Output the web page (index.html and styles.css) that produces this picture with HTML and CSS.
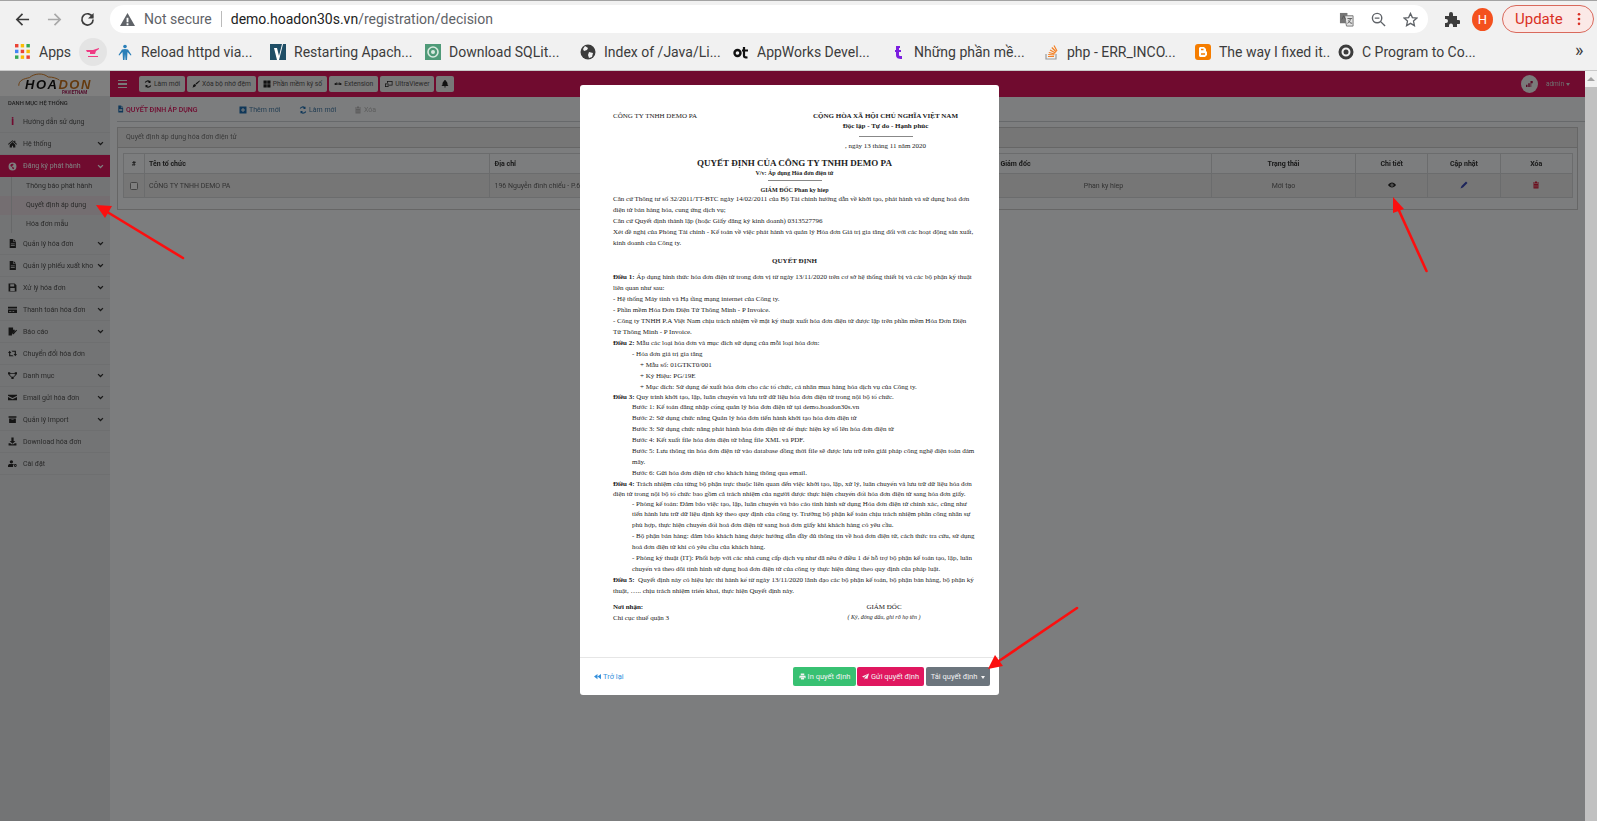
FILE: index.html
```html
<!DOCTYPE html>
<html lang="en">
<head>
    <meta charset="UTF-8">
    <meta name="viewport" content="width=device-width, initial-scale=1.0">
    <title>Quyết định áp dụng</title>
    <link rel="stylesheet" href="styles.css">
</head>
<body>
    <svg class="sprite" width="0" height="0">
        <symbol id="i-file" viewBox="0 0 16 16"><path d="M3 0h6v5h5v11H3zM10 0l4 4h-4zM5 8h7v1.500H5zM5 11h7v1.500H5z" fill-rule="evenodd"/></symbol>
        <symbol id="i-home" viewBox="0 0 16 16"><path d="M8 2 0 9l1 1 7-6 7 6 1-1-3-2.600V3h-2v1.800zM3 10v5h4v-3h2v3h4v-5L8 5.500z"/></symbol>
        <symbol id="i-globe" viewBox="0 0 16 16"><path d="M8 1a7 7 0 1 0 0 14A7 7 0 0 0 8 1zM5 4l3-1 2 1-1 2-2 1 1 2 3 1-1 3-2-1-1-3-3-2z" fill-rule="evenodd"/></symbol>
        <symbol id="i-save" viewBox="0 0 16 16"><path d="M1 1h11l3 3v11H1zM4 2v4h7V2zM4 9v5h8V9z" fill-rule="evenodd"/></symbol>
        <symbol id="i-card" viewBox="0 0 16 16"><path d="M0 3h16v3H0zM0 8h16v6H0zM2 11v1.500h4V11zM8 11v1.500h3V11z" fill-rule="evenodd"/></symbol>
        <symbol id="i-edit" viewBox="0 0 16 16"><path d="M1 1h8v4h3v2l-5 5v3H1zM15 5l1 1-6 7H8v-2z"/></symbol>
        <symbol id="i-retweet" viewBox="0 0 16 16"><path d="M3 3 0 7h2v6h8l-2-2H4V7h2zM13 13l3-4h-2V3H6l2 2h4v4h-2z"/></symbol>
        <symbol id="i-sitemap" viewBox="0 0 16 16"><path d="M0 2h4v4H0zM12 2h4v4h-4zM6 10h4v4H6zM4 3.500h8V5H4zM2.500 6l4 4-1 1-4-4zM13.500 6l-4 4 1 1 4-4z"/></symbol>
        <symbol id="i-mail" viewBox="0 0 16 16"><path d="M0 3h16v2L8 9 0 5zM0 7l8 4 8-4v6H0z"/></symbol>
        <symbol id="i-archive" viewBox="0 0 16 16"><path d="M1 2h14v3H1zM2 6h12v8H2zM6 8v1h4V8z" fill-rule="evenodd"/></symbol>
        <symbol id="i-download" viewBox="0 0 16 16"><path d="M6 1h4v6h3l-5 5-5-5h3zM1 11h3l2 2h4l2-2h3v4H1z"/></symbol>
        <symbol id="i-user" viewBox="0 0 16 16"><path d="M6 2a3 3 0 1 1 0 6 3 3 0 0 1 0-6zM0 14v-2c0-2 2-3 3-3h6c.5 0 1 .2 1.400.4A4 4 0 0 0 9 14zM13 9a2.500 2.500 0 1 0 0 5 2.500 2.500 0 0 0 0-5zm0 1.500a1 1 0 1 1 0 2 1 1 0 0 1 0-2z" fill-rule="evenodd"/></symbol>
        <symbol id="i-chev" viewBox="0 0 10 10"><path d="M1.500 3 5 6.500 8.500 3" fill="none" stroke="currentColor" stroke-width="1.800"/></symbol>
        <symbol id="i-refresh" viewBox="0 0 16 16"><path d="M13 1v5H8l2-2a4.500 4.500 0 0 0-6.400 1.500L1.500 4.500A7 7 0 0 1 12 2zM3 15v-5h5l-2 2a4.500 4.500 0 0 0 6.400-1.500l2.100 1A7 7 0 0 1 4 14z"/></symbol>
        <symbol id="i-trash" viewBox="0 0 16 16"><path d="M2 3h4V1h4v2h4v2H2zM3 6h10v9H3zM5.500 8v5h1V8zM9.500 8v5h1V8z" fill-rule="evenodd"/></symbol>
    </svg>

    <div class="toolbar">
        <svg class="tb-icon back" viewBox="0 0 16 16"><path d="M15 8H2.500M8 2 2 8l6 6" fill="none" stroke="#3c3c3c" stroke-width="1.800"/></svg>
        <svg class="tb-icon forward" viewBox="0 0 16 16"><path d="M1 8h12.500M8 2l6 6-6 6" fill="none" stroke="#a8a8a8" stroke-width="1.800"/></svg>
        <svg class="tb-icon reload" viewBox="0 0 16 16"><path d="M13.500 5.500A6 6 0 1 0 14 8" fill="none" stroke="#3c3c3c" stroke-width="1.800"/><path d="M14.500 1v6h-6z" fill="#3c3c3c"/></svg>
        <div class="omnibox">
            <svg class="warn" viewBox="0 0 16 16"><path d="M8 1 0 15h16zM7 6h2v5H7zM7 12h2v2H7z" fill="#5f6368" fill-rule="evenodd"/></svg>
            <span class="not-secure">Not secure</span>
            <span class="url"><b>demo.hoadon30s.vn</b>/registration/decision</span>
            <svg class="omni-icon translate" viewBox="0 0 16 16"><path d="M1 1h8v11H1z" fill="#757575"/><path d="M6 4h9v11H8z" fill="#e4e4e4" stroke="#757575"/><path d="M3 8l2-4 2 4M9 7h5M12 7c0 3-1 4-3 5M10 9c1 2 2 3 4 3" fill="none" stroke="#555"/></svg>
            <svg class="omni-icon zoom-out" viewBox="0 0 16 16"><circle cx="6.500" cy="6.500" r="5" fill="none" stroke="#5f6368" stroke-width="1.500"/><path d="M10 10l5 5M4 6.500h5" stroke="#5f6368" stroke-width="1.500"/></svg>
            <svg class="omni-icon star" viewBox="0 0 16 16"><path d="m8 1.500 2 4.500 4.800.5-3.600 3.200 1 4.800L8 12.100l-4.200 2.400 1-4.800L1.200 6.500 6 6z" fill="none" stroke="#5f6368" stroke-width="1.400"/></svg>
        </div>
        <svg class="puzzle" viewBox="0 0 16 16"><path d="M1 5h4V3a2 2 0 0 1 4 0v2h4v4h1.500a2 2 0 0 1 0 4H13v3H9v-1.500a2 2 0 0 0-4 0V16H1v-4h1a2 2 0 0 0 0-4H1z" fill="#3c3c3c"/></svg>
        <span class="profile">H</span>
        <div class="update">
            <span>Update</span>
            <svg class="dots" viewBox="0 0 4 16"><circle cx="2" cy="2.500" r="1.500"/><circle cx="2" cy="8" r="1.500"/><circle cx="2" cy="13.500" r="1.500"/></svg>
        </div>
    </div>

    <div class="bookmarks">
        <a class="bm"><svg class="bm-icon" viewBox="0 0 14 14"><g><path d="M0 0h3v3H0z" fill="#ea4335"/><path d="M5 0h3v3H5z" fill="#fbbc05"/><path d="M10 0h3v3h-3z" fill="#34a853"/><path d="M0 5h3v3H0z" fill="#4285f4"/><path d="M5 5h3v3H5z" fill="#ea4335"/><path d="M10 5h3v3h-3z" fill="#fbbc05"/><path d="M0 10h3v3H0z" fill="#34a853"/><path d="M5 10h3v3H5z" fill="#fbbc05"/><path d="M10 10h3v3h-3z" fill="#ea4335"/></g></svg>Apps</a>
        <a class="bm bm-blank"><span class="bm-hover"><svg class="bm-icon" viewBox="0 0 16 16"><path d="M1 6h7l6-2v1l-3 2-1 3H5V8H2zM3 12h10v1H3z" fill="#ef3b84"/></svg></span></a>
        <a class="bm"><svg class="bm-icon" viewBox="0 0 16 16"><circle cx="8" cy="2.500" r="1.800" fill="#2a7fb8"/><path d="M8 5 5 5.500 1.500 11l.8.500L5.500 8 6 16h1.500L8 10l.5 6H10l.5-8 3.200 3.500.8-.5L11 5.500z" fill="#2a7fb8"/></svg>Reload httpd via...</a>
        <a class="bm"><svg class="bm-icon" viewBox="0 0 16 16"><path d="M0 0h16v16H0z" fill="#1f4e66"/><path d="M4 4h3l2 8 3-12h1L9 16H7z" fill="#fff"/></svg>Restarting Apach...</a>
        <a class="bm"><svg class="bm-icon" viewBox="0 0 16 16"><path d="M0 0h16v16H0z" fill="#4f9a78"/><circle cx="8" cy="8" r="5" fill="none" stroke="#d8eadf" stroke-width="1.600"/><circle cx="8" cy="8" r="2" fill="#d8eadf"/></svg>Download SQLit...</a>
        <a class="bm"><svg class="bm-icon" viewBox="0 0 16 16"><circle cx="8" cy="8" r="7.500" fill="#3c3c3c"/><path d="M5 2 8 4 7 6 4 7 3 5zM9 8l4 1-1 4-3 1-1-3z" fill="#f1f1f1"/></svg>Index of /Java/Li...</a>
        <a class="bm"><svg class="bm-icon" viewBox="0 0 16 16"><circle cx="4.500" cy="9" r="3" fill="none" stroke="#111" stroke-width="2.400"/><path d="M11 3v9c0 1 1 1.500 3.500 1.500M9 6.500h6" fill="none" stroke="#111" stroke-width="2.200"/></svg>AppWorks Devel...</a>
        <a class="bm"><svg class="bm-icon" viewBox="0 0 16 16"><path d="M6 2h4v2H9v2h2v2H9v3c0 1 1 1 3 1v3c-4 0-6-1-6-4V8H5V6h1z" fill="#7c1fe0"/></svg>Những phần mề...</a>
        <a class="bm"><svg class="bm-icon" viewBox="0 0 16 16"><path d="M3 10v5h10v-5" fill="none" stroke="#9a9a9a" stroke-width="1.200"/><path d="M5 12.500h6M5.200 10.500l6 .5M5.800 8.500l6 1.500M7 6l5.500 3M8.800 3.500l4.500 4.500M11 1.500l3 5.500" stroke="#f48024" stroke-width="1.200"/></svg>php - ERR_INCO...</a>
        <a class="bm"><svg class="bm-icon" viewBox="0 0 16 16"><rect width="16" height="16" rx="3" fill="#f57d00"/><path d="M5 3h4l2 2v2l1 1v3l-2 2H5l-1-1V4z" fill="#fff"/><path d="M6 5.500h2.500M6 10h4" stroke="#f57d00" stroke-width="1.400"/></svg>The way I fixed it..</a>
        <a class="bm"><svg class="bm-icon" viewBox="0 0 16 16"><circle cx="8" cy="8" r="6" fill="none" stroke="#3c3c3c" stroke-width="3"/><circle cx="8" cy="8" r="2.500" fill="#3c3c3c"/></svg>C Program to Co...</a>
        <span class="bm-more">»</span>
    </div>

    <div class="app">
        <aside class="sidebar">
            <div class="logo">
                <svg class="logo-arc" viewBox="0 0 70 24"><path d="M1 22C1 13 9 11 18 9 26 2 40 1 48 8c8 0 14 2 18 5" fill="none" stroke="#d9832a" stroke-width="1.600"/></svg>
                <div class="logo-word">HOA<span>DON</span></div>
                <div class="logo-sub">PAVIETNAM</div>
            </div>
            <div class="side-title">DANH MỤC HỆ THỐNG</div>
            <ul class="menu">
                <li class="menu-item"><span class="menu-info">i</span>Hướng dẫn sử dụng</li>
                <li class="menu-item"><svg class="menu-icon"><use href="#i-home"/></svg>Hệ thống<svg class="chev"><use href="#i-chev"/></svg></li>
                <li class="menu-item active"><svg class="menu-icon"><use href="#i-globe"/></svg>Đăng ký phát hành<svg class="chev"><use href="#i-chev"/></svg></li>
                <li class="submenu">
                    <div class="sub-item">Thông báo phát hành</div>
                    <div class="sub-item current">Quyết định áp dụng</div>
                    <div class="sub-item">Hóa đơn mẫu</div>
                </li>
                <li class="menu-item"><svg class="menu-icon"><use href="#i-file"/></svg>Quản lý hóa đơn<svg class="chev"><use href="#i-chev"/></svg></li>
                <li class="menu-item"><svg class="menu-icon"><use href="#i-file"/></svg>Quản lý phiếu xuất kho<svg class="chev"><use href="#i-chev"/></svg></li>
                <li class="menu-item"><svg class="menu-icon"><use href="#i-save"/></svg>Xử lý hóa đơn<svg class="chev"><use href="#i-chev"/></svg></li>
                <li class="menu-item"><svg class="menu-icon"><use href="#i-card"/></svg>Thanh toán hóa đơn<svg class="chev"><use href="#i-chev"/></svg></li>
                <li class="menu-item"><svg class="menu-icon"><use href="#i-edit"/></svg>Báo cáo<svg class="chev"><use href="#i-chev"/></svg></li>
                <li class="menu-item"><svg class="menu-icon"><use href="#i-retweet"/></svg>Chuyển đổi hóa đơn</li>
                <li class="menu-item"><svg class="menu-icon"><use href="#i-sitemap"/></svg>Danh mục<svg class="chev"><use href="#i-chev"/></svg></li>
                <li class="menu-item"><svg class="menu-icon"><use href="#i-mail"/></svg>Email gửi hóa đơn<svg class="chev"><use href="#i-chev"/></svg></li>
                <li class="menu-item"><svg class="menu-icon"><use href="#i-archive"/></svg>Quản lý Import<svg class="chev"><use href="#i-chev"/></svg></li>
                <li class="menu-item"><svg class="menu-icon"><use href="#i-download"/></svg>Download hóa đơn</li>
                <li class="menu-item"><svg class="menu-icon"><use href="#i-user"/></svg>Cài đặt</li>
            </ul>
        </aside>

        <main class="main">
            <header class="topbar">
                <div class="hamburger"><span></span><span></span><span></span></div>
                <button class="top-btn"><svg class="btn-icon"><use href="#i-refresh"/></svg>Làm mới</button>
                <button class="top-btn"><svg class="btn-icon" viewBox="0 0 16 16"><path d="M15 1l1 1-7 7-2-2zM6 8l2 2c0 3-3 5-8 5 2-1 2-2 2-3 0-2 2-4 4-4z"/></svg>Xóa bộ nhớ đệm</button>
                <button class="top-btn"><svg class="btn-icon" viewBox="0 0 16 16"><path d="M1 1h6.500v6.500H1zM8.500 1H15v6.500H8.500zM1 8.500h6.500V15H1zM8.500 8.500H15V15H8.500z"/></svg>Phần mềm ký số</button>
                <button class="top-btn"><svg class="btn-icon" viewBox="0 0 16 16"><path d="M0 8l5-3 3 1 3-1 5 3-3 2H3zM5 7v2h6V7z" fill-rule="evenodd"/></svg>Extension</button>
                <button class="top-btn"><svg class="btn-icon" viewBox="0 0 16 16"><path d="M4 2h11v9H8v-1.500h5.500v-6H5.500V6H4zM0 7h7v7H0zM1.500 8.500v4h4v-4z" fill-rule="evenodd"/></svg>UltraViewer</button>
                <button class="top-btn"><svg class="btn-icon only" viewBox="0 0 16 16"><path d="M8 0a1.500 1.500 0 0 1 1.500 2C12 3 13 5 13 8c0 2 1 3 2 4H1c1-1 2-2 2-4 0-3 1-5 3.500-6A1.500 1.500 0 0 1 8 0zM6 13h4a2 2 0 0 1-4 0z"/></svg></button>
                <div class="user">
                    <span class="avatar"><svg viewBox="0 0 16 16"><path d="M4 9h2v3H4zM7 7h2v5H7zM10 4h3v3h-2v5h-1z" fill="#b0174f"/></svg></span>
                    <span class="user-name">admin</span><i class="caret"></i>
                </div>
            </header>
            <section class="content">
                <div class="page-head">
                    <h2 class="page-title"><svg class="head-icon"><use href="#i-file"/></svg>QUYẾT ĐỊNH ÁP DỤNG</h2>
                    <a class="action add"><svg class="head-icon" viewBox="0 0 16 16"><path d="M1 1h14v14H1zM7 4v3H4v2h3v3h2V9h3V7H9V4z" fill-rule="evenodd"/></svg>Thêm mới</a>
                    <a class="action reload-link"><svg class="head-icon"><use href="#i-refresh"/></svg>Làm mới</a>
                    <a class="action off"><svg class="head-icon"><use href="#i-trash"/></svg>Xóa</a>
                </div>
                <div class="panel">
                    <div class="panel-head">Quyết định áp dụng hóa đơn điện tử</div>
                    <div class="panel-body">
                        <table class="grid">
                            <colgroup>
                                <col class="c-check"><col class="c-name"><col class="c-addr"><col class="c-boss"><col class="c-state"><col class="c-op"><col class="c-op"><col class="c-op">
                            </colgroup>
                            <thead>
                                <tr>
                                    <th class="center">#</th>
                                    <th>Tên tổ chức</th>
                                    <th>Địa chỉ</th>
                                    <th>Giám đốc</th>
                                    <th class="center">Trạng thái</th>
                                    <th class="center">Chi tiết</th>
                                    <th class="center">Cập nhật</th>
                                    <th class="center">Xóa</th>
                                </tr>
                            </thead>
                            <tbody>
                                <tr>
                                    <td class="center"><span class="checkbox"></span></td>
                                    <td>CÔNG TY TNHH DEMO PA</td>
                                    <td>196 Nguyễn đình chiểu - P.6 - Quận 3 - TP Hồ Chí Minh</td>
                                    <td class="center">Phan ky hiep</td>
                                    <td class="center">Mới tạo</td>
                                    <td class="center"><svg class="row-icon eye" viewBox="0 0 16 16"><path d="M0 8c2-3 5-5 8-5s6 2 8 5c-2 3-5 5-8 5s-6-2-8-5zm8-3a3 3 0 1 0 0 6 3 3 0 0 0 0-6z" fill-rule="evenodd"/><circle cx="8" cy="8" r="1.500"/></svg></td>
                                    <td class="center"><svg class="row-icon pen" viewBox="0 0 16 16"><path d="M12 1l3 3-9 9-5 2 2-5z"/></svg></td>
                                    <td class="center"><svg class="row-icon bin"><use href="#i-trash"/></svg></td>
                                </tr>
                            </tbody>
                        </table>
                    </div>
                </div>
            </section>
        </main>

        <div class="scrollbar">
            <i class="scroll-up"></i>
            <div class="scroll-thumb"></div>
        </div>

        <div class="backdrop"></div>

        <div class="modal">
            <div class="doc">
                <div class="doc-head">
                    <div class="doc-company">CÔNG TY TNHH DEMO PA</div>
                    <div class="doc-nation">
                        <div class="ln-s"><b>CỘNG HÒA XÃ HỘI CHỦ NGHĨA VIỆT NAM</b></div>
                        <div class="ln-s"><b>Độc lập - Tự do - Hạnh phúc</b></div>
                        <hr class="rule rule-head">
                        <div class="ln-s">, ngày 13 tháng 11 năm 2020</div>
                    </div>
                </div>
                <div class="doc-title">QUYẾT ĐỊNH CỦA CÔNG TY TNHH DEMO PA</div>
                <div class="doc-sub"><b>V/v: Áp dụng Hóa đơn điện tử</b></div>
                <hr class="rule rule-sub">
                <div class="doc-boss"><b>GIÁM ĐỐC Phan ky hiep</b></div>
                <div class="ln">Căn cứ Thông tư số 32/2011/TT-BTC ngày 14/02/2011 của Bộ Tài chính hướng dẫn về khởi tạo, phát hành và sử dụng hoá đơn</div>
                <div class="ln">điện tử bán hàng hóa, cung ứng dịch vụ;</div>
                <div class="ln">Căn cứ Quyết định thành lập (hoặc Giấy đăng ký kinh doanh) 0313527796</div>
                <div class="ln">Xét đề nghị của Phòng Tài chính - Kế toán về việc phát hành và quản lý Hóa đơn Giá trị gia tăng đối với các hoạt động sản xuất,</div>
                <div class="ln">kinh doanh của Công ty.</div>
                <div class="doc-decide"><b>QUYẾT ĐỊNH</b></div>
                <div class="ln"><b>Điều 1:</b> Áp dụng hình thức hóa đơn điện tử trong đơn vị từ ngày 13/11/2020 trên cơ sở hệ thống thiết bị và các bộ phận kỹ thuật</div>
                <div class="ln">liên quan như sau:</div>
                <div class="ln">- Hệ thống Máy tính và Hạ tầng mạng internet của Công ty.</div>
                <div class="ln">- Phần mềm Hóa Đơn Điện Tử Thông Minh - P Invoice.</div>
                <div class="ln">- Công ty TNHH P.A Việt Nam chịu trách nhiệm về mặt kỹ thuật xuất hóa đơn điện tử được lập trên phần mềm Hóa Đơn Điện</div>
                <div class="ln">Tử Thông Minh - P Invoice.</div>
                <div class="ln"><b>Điều 2:</b> Mẫu các loại hóa đơn và mục đích sử dụng của mỗi loại hóa đơn:</div>
                <div class="ln in1">- Hóa đơn giá trị gia tăng</div>
                <div class="ln in2">+ Mẫu số: 01GTKT0/001</div>
                <div class="ln in2">+ Ký Hiệu: PG/19E</div>
                <div class="ln-s in2">+ Mục đích: Sử dụng để xuất hóa đơn cho các tổ chức, cá nhân mua hàng hóa dịch vụ của Công ty.</div>
                <div class="ln-s"><b>Điều 3:</b> Quy trình khởi tạo, lập, luân chuyển và lưu trữ dữ liệu hóa đơn điện tử trong nội bộ tổ chức.</div>
                <div class="ln in1">Bước 1: Kế toán đăng nhập cổng quản lý hóa đơn điện tử tại demo.hoadon30s.vn</div>
                <div class="ln in1">Bước 2: Sử dụng chức năng Quản lý hóa đơn tiến hành khởi tạo hóa đơn điện tử</div>
                <div class="ln in1">Bước 3: Sử dụng chức năng phát hành hóa đơn điện tử để thực hiện ký số lên hóa đơn điện tử</div>
                <div class="ln in1">Bước 4: Kết xuất file hóa đơn điện tử bằng file XML và PDF.</div>
                <div class="ln in1">Bước 5: Lưu thông tin hóa đơn điện tử vào database đồng thời file sẽ được lưu trữ trên giải pháp công nghệ điện toán đám</div>
                <div class="ln in1">mây.</div>
                <div class="ln in1">Bước 6: Gửi hóa đơn điện tử cho khách hàng thông qua email.</div>
                <div class="ln-s"><b>Điều 4:</b> Trách nhiệm của từng bộ phận trực thuộc liên quan đến việc khởi tạo, lập, xử lý, luân chuyển và lưu trữ dữ liệu hóa đơn</div>
                <div class="ln-s">điện tử trong nội bộ tổ chức bao gồm cả trách nhiệm của người được thực hiện chuyển đổi hóa đơn điện tử sang hóa đơn giấy.</div>
                <div class="ln-s in1">- Phòng kế toán: Đảm bảo việc tạo, lập, luân chuyển và báo cáo tình hình sử dụng Hóa đơn điện tử chính xác, cũng như</div>
                <div class="ln in1">tiến hành lưu trữ dữ liệu định kỳ theo quy định của công ty. Trưởng bộ phận kế toán chịu trách nhiệm phân công nhân sự</div>
                <div class="ln in1">phù hợp, thực hiện chuyển đổi hoá đơn điện tử sang hoá đơn giấy khi khách hàng có yêu cầu.</div>
                <div class="ln in1">- Bộ phận bán hàng: đảm bảo khách hàng được hướng dẫn đầy đủ thông tin về hoá đơn điện tử, cách thức tra cứu, sử dụng</div>
                <div class="ln in1">hoá đơn điện tử khi có yêu cầu của khách hàng.</div>
                <div class="ln in1">- Phòng kỹ thuật (IT): Phối hợp với các nhà cung cấp dịch vụ như đã nêu ở điều 1 để hỗ trợ bộ phận kế toán tạo, lập, luân</div>
                <div class="ln in1">chuyển và theo dõi tình hình sử dụng hoá đơn điện tử của công ty thực hiện đúng theo quy định của pháp luật.</div>
                <div class="ln"><b>Điều 5:</b>&nbsp; Quyết định này có hiệu lực thi hành kể từ ngày 13/11/2020 lãnh đạo các bộ phận kế toán, bộ phận bán hàng, bộ phận kỹ</div>
                <div class="ln-s">thuật, ….. chịu trách nhiệm triển khai, thực hiện Quyết định này.</div>
                <div class="doc-sign">
                    <div class="sign-left">
                        <div class="ln"><b>Nơi nhận:</b></div>
                        <div class="ln">Chi cục thuế quận 3</div>
                    </div>
                    <div class="sign-right">
                        <div class="ln">GIÁM ĐỐC</div>
                        <div class="sign-note">( Ký, đóng dấu, ghi rõ họ tên )</div>
                    </div>
                </div>
            </div>
            <div class="modal-foot">
                <a class="back-link"><svg class="foot-icon" viewBox="0 0 16 16"><path d="M8 2v12L0 8zM16 2v12L8 8z"/></svg>Trở lại</a>
                <button class="foot-btn green"><svg class="foot-icon" viewBox="0 0 16 16"><path d="M4 1h8v4H4zM1 6h14v6h-2.500V9.500h-9V12H1zM4.500 10.500h7V15h-7z"/></svg>In quyết định</button>
                <button class="foot-btn crimson"><svg class="foot-icon" viewBox="0 0 16 16"><path d="M16 1 0 8l4 2 9-7-7 8v4l3-3 3 2z"/></svg>Gửi quyết định</button>
                <button class="foot-btn slate">Tải quyết định<i class="caret light"></i></button>
            </div>
        </div>
    </div>

    <svg class="arrows" viewBox="0 0 1597 821">
        <g fill="none" stroke="#fb0f0f" stroke-width="2.600" stroke-linecap="round">
            <path d="M183 258 104 210"/>
            <path d="M1426.500 271 1396 204"/>
            <path d="M1077 608 996 663"/>
        </g>
        <g fill="#fb0f0f">
            <path d="M96 205 112 206 105 218z"/>
            <path d="M1393 197 1404 209 1393 213z"/>
            <path d="M988 669 995 655 1003 666z"/>
        </g>
    </svg>
</body>
</html>
```

FILE: styles.css
```css
* {
    box-sizing: border-box;
}
html, body {
    margin: 0;
    height: 100%;
    overflow: hidden;
}
body {
    display: flex;
    flex-direction: column;
    position: relative;
    font-family: Roboto, "Liberation Sans", sans-serif;
    background: #f1f1f1;
}
.sprite {
    position: absolute;
}

/* browser chrome */
.toolbar {
    flex: none;
    height: 37px;
    display: flex;
    align-items: center;
    padding: 0 5px 0 15px;
    border-top: 1px solid #a3a3a3;
    background: #f1f1f1;
}
.tb-icon {
    width: 15px;
    height: 15px;
    flex: none;
}
.forward {
    margin-left: 17px;
}
.reload {
    margin-left: 18px;
}
.omnibox {
    flex: none;
    width: 1318px;
    height: 28px;
    margin-left: 15px;
    display: flex;
    align-items: center;
    border-radius: 14px;
    background: #fff;
    padding: 0 10px;
    font-size: 14px;
}
.warn {
    width: 15px;
    height: 15px;
    flex: none;
}
.not-secure {
    margin-left: 9px;
    padding-right: 9px;
    border-right: 1px solid #bbb;
    color: #5f6368;
}
.url {
    margin-left: 9px;
    color: #5f6368;
}
.url b {
    font-weight: 400;
    color: #222;
}
.omni-icon {
    width: 15px;
    height: 15px;
    flex: none;
}
.translate {
    margin-left: auto;
}
.zoom-out, .star {
    margin-left: 17px;
}
.puzzle {
    width: 16px;
    height: 16px;
    margin-left: 16px;
    flex: none;
}
.profile {
    flex: none;
    width: 21px;
    height: 23px;
    margin-left: 12px;
    border-radius: 50%;
    background: #f4511e;
    color: #fff;
    font-size: 13px;
    line-height: 23px;
    text-align: center;
}
.update {
    flex: none;
    width: 92px;
    height: 28px;
    margin-left: 9px;
    display: flex;
    align-items: center;
    padding-left: 12px;
    border: 1px solid #d9695c;
    border-radius: 14px;
    background: #fbe9e7;
    color: #d93025;
    font-size: 15px;
}
.dots {
    width: 4px;
    height: 14px;
    margin-left: 14px;
    fill: #d93025;
}

.bookmarks {
    flex: none;
    height: 34px;
    display: grid;
    grid-template-columns: 64px 38px 153px 155px 155px 153px 157px 153px 152px 143px 237px 1fr;
    align-items: center;
    padding: 0 0 3px 15px;
    background: #f1f1f1;
    border-bottom: 1px solid #c9c9c9;
    color: #3c3c3c;
    font-size: 14px;
    white-space: nowrap;
}
.bm {
    display: flex;
    align-items: center;
}
.bm-icon {
    width: 16px;
    height: 16px;
    flex: none;
    margin-right: 8px;
}
.bm-hover {
    width: 28px;
    height: 28px;
    display: flex;
    align-items: center;
    justify-content: center;
    border-radius: 50%;
    background: #e4e4e4;
}
.bm-hover .bm-icon {
    margin: 0;
}
.bm-more {
    font-size: 18px;
    line-height: 18px;
    margin-bottom: 4px;
}

/* app behind the dialog */
.app {
    flex: 1;
    min-height: 0;
    display: flex;
    position: relative;
    background: #f8fbfd;
    font-size: 7px;
    color: #666;
}
.sidebar {
    flex: none;
    width: 110px;
    background: #e6e8ea;
    color: #555;
    filter: blur(0.3px);
}
.logo {
    height: 25px;
    position: relative;
    background: #fff;
    overflow: hidden;
}
.logo-arc {
    position: absolute;
    left: 18px;
    top: 1px;
    width: 44px;
    height: 15px;
}
.logo-word {
    position: absolute;
    left: 25px;
    top: 6px;
    font: italic 700 13px "Liberation Sans", sans-serif;
    letter-spacing: 1.500px;
    color: #111;
}
.logo-word span {
    color: #c9741f;
}
.logo-sub {
    position: absolute;
    left: 62px;
    top: 19px;
    font-size: 4.500px;
    font-weight: 700;
    color: #a81d5a;
}
.side-title {
    height: 15px;
    padding: 4px 0 0 8px;
    font-size: 5.800px;
    font-weight: 500;
    color: #444;
}
.menu {
    list-style: none;
    margin: 0;
    padding: 0;
}
.menu-item {
    height: 22px;
    display: flex;
    align-items: center;
    padding: 0 3px 0 8px;
    border-bottom: 1px solid #dcdee0;
    white-space: nowrap;
}
.menu-icon {
    width: 9px;
    height: 9px;
    flex: none;
    margin-right: 6px;
    fill: #2a2a2a;
}
.menu-info {
    width: 9px;
    margin-right: 6px;
    flex: none;
    text-align: center;
    color: #e0175f;
    font-weight: 900;
    font-size: 10px;
}
.chev {
    width: 7px;
    height: 7px;
    flex: none;
    margin-left: auto;
    margin-right: 3px;
    color: #333;
}
.menu-item.active {
    background: #e0175f;
    color: #fff;
    border-bottom: 0;
}
.menu-item.active .menu-icon {
    fill: #fff;
}
.menu-item.active .chev {
    color: #fff;
}
.submenu {
    height: 56px;
    position: relative;
}
.submenu::before {
    content: "";
    position: absolute;
    left: 11px;
    top: 0;
    bottom: 0;
    width: 1px;
    background: #cfd1d3;
}
.sub-item {
    height: 19px;
    line-height: 19px;
    padding-left: 26px;
    white-space: nowrap;
}
.sub-item.current {
    background: #e9dde2;
}

.main {
    flex: 1;
    min-width: 0;
    display: flex;
    flex-direction: column;
    filter: blur(0.3px);
}
.topbar {
    flex: none;
    height: 26px;
    display: flex;
    align-items: center;
    gap: 2px;
    padding-left: 8px;
    background: #e0175f;
}
.hamburger {
    width: 9px;
    margin-right: 10px;
}
.hamburger span {
    display: block;
    height: 1.500px;
    margin: 2px 0;
    background: #f3f3f3;
}
.top-btn {
    height: 16px;
    padding: 0 5px;
    display: flex;
    align-items: center;
    border: 0;
    border-radius: 2px;
    background: #f1f1f1;
    color: #555;
    font: 6.700px Roboto, sans-serif;
    white-space: nowrap;
}
.btn-icon {
    width: 8px;
    height: 8px;
    flex: none;
    margin-right: 2px;
    fill: #222;
}
.btn-icon.only {
    margin: 0;
}
.user {
    margin-left: auto;
    margin-right: 15px;
    display: flex;
    align-items: center;
    color: #ddd;
    font-size: 6.500px;
}
.avatar {
    width: 17px;
    height: 18px;
    margin-right: 8px;
    border-radius: 50%;
    background: #f4f4f4;
    display: flex;
    align-items: center;
    justify-content: center;
}
.avatar svg {
    width: 12px;
    height: 12px;
}
.caret {
    display: inline-block;
    margin-left: 2px;
    border-top: 3px solid #ddd;
    border-left: 2.500px solid transparent;
    border-right: 2.500px solid transparent;
}
.caret.light {
    margin-left: 4px;
    border-top-color: #f4f4f4;
}
.content {
    flex: 1;
    padding-left: 7px;
}
.page-head {
    height: 25px;
    padding-top: 1px;
    display: flex;
    align-items: center;
    border-bottom: 1px solid #cfd3d6;
}
.page-title {
    width: 122px;
    margin: 0;
    font-size: 7px;
    font-weight: 500;
    color: #e0175f;
    white-space: nowrap;
}
.head-icon {
    width: 7px;
    height: 8px;
    margin-right: 2px;
    vertical-align: -1px;
    fill: #1f6fb2;
}
.action {
    width: 60px;
    display: flex;
    align-items: center;
    color: #4a7ea8;
    font-size: 7px;
}
.action.reload-link {
    width: 55px;
}
.action .head-icon {
    flex: none;
    width: 8px;
    height: 8px;
}
.action.off {
    color: #bbb;
}
.action.off .head-icon {
    fill: #bbb;
}
.panel {
    width: 1461px;
    margin-top: 5px;
    height: 83px;
    border: 1px solid #ccc;
}
.panel-head {
    height: 20px;
    line-height: 19px;
    padding-left: 8px;
    background: #ececec;
    border-bottom: 1px solid #ccc;
    font-size: 7px;
    color: #777;
}
.panel-body {
    padding: 5px;
}
.grid {
    width: 1449px;
    table-layout: fixed;
    border-collapse: collapse;
}
.c-check { width: 20.500px; }
.c-name { width: 345.500px; }
.c-addr { width: 506px; }
.c-boss { width: 216px; }
.c-state { width: 144px; }
.c-op { width: 72.300px; }
.grid th, .grid td {
    border: 1px solid #d6d8da;
    padding: 0 4.500px;
    text-align: left;
    font-size: 7px;
    white-space: nowrap;
    overflow: hidden;
}
.grid th {
    height: 20px;
    font-weight: 700;
    color: #333;
}
.grid td {
    height: 24px;
    background: #ededed;
    color: #666;
}
.grid .center {
    text-align: center;
}
.checkbox {
    display: inline-block;
    width: 8px;
    height: 8px;
    margin-top: 2px;
    border: 1px solid #888;
    border-radius: 1.500px;
    background: #fff;
}
.row-icon {
    width: 8px;
    height: 8px;
    vertical-align: -1px;
}
.row-icon.eye {
    fill: #222;
}
.row-icon.pen {
    fill: #3a49b5;
}
.row-icon.bin {
    fill: #d81e3c;
}

.scrollbar {
    flex: none;
    width: 12px;
    background: #f1f1f1;
    display: flex;
    flex-direction: column;
    align-items: center;
    position: relative;
    z-index: 3;
}
.scroll-up {
    margin-top: 6px;
    border-bottom: 4px solid #a3a3a3;
    border-left: 4px solid transparent;
    border-right: 4px solid transparent;
}
.scroll-thumb {
    width: 100%;
    flex: 1;
    margin-top: 6px;
    background: #c1c1c1;
}

/* dialog */
.backdrop {
    position: absolute;
    inset: 0;
    z-index: 1;
    background: rgba(0, 0, 0, 0.5);
}
.modal {
    position: absolute;
    left: 580px;
    top: 14px;
    z-index: 2;
    width: 419px;
    height: 610px;
    display: flex;
    flex-direction: column;
    background: #fff;
    border-radius: 3px;
    color: #222;
}
.doc {
    flex: none;
    height: 573px;
    padding: 26px 23px 0 33px;
    font: 7px "Liberation Serif", serif;
    border-bottom: 1px solid #e6e6e6;
    white-space: nowrap;
}
.doc-head {
    display: flex;
}
.doc-company {
    width: 185px;
    line-height: 10px;
}
.doc-nation {
    width: 163px;
    margin-left: 6px;
    text-align: center;
}
.ln-s {
    height: 10px;
    line-height: 10px;
}
.ln {
    height: 11px;
    line-height: 11px;
}
.rule {
    height: 0;
    border: 0;
    border-top: 1px solid #888;
}
.rule-head {
    width: 54px;
    margin: 5px auto 4px;
}
.doc-title {
    margin-top: 5px;
    height: 13px;
    line-height: 14px;
    text-align: center;
    font-size: 9px;
    font-weight: 700;
}
.doc-sub {
    height: 8px;
    line-height: 8px;
    text-align: center;
    font-size: 6px;
}
.rule-sub {
    width: 54px;
    margin: 3px auto 0;
}
.doc-boss {
    height: 13px;
    padding-top: 2px;
    line-height: 14px;
    text-align: center;
    font-size: 6.100px;
}
.doc-decide {
    margin: 7px 0 5px;
    height: 11px;
    line-height: 11px;
    text-align: center;
}
.in1 {
    padding-left: 19px;
}
.in2 {
    padding-left: 27px;
}
.doc-sign {
    display: flex;
    margin-top: 6px;
}
.sign-left {
    width: 212px;
}
.sign-right {
    width: 140px;
    text-align: center;
    margin-left: -11px;
}
.sign-note {
    height: 8px;
    line-height: 8px;
    font-size: 6px;
    font-style: italic;
}
.modal-foot {
    flex: 1;
    display: flex;
    align-items: center;
    padding: 0 9px 0 14px;
    font: 7.500px Roboto, sans-serif;
}
.back-link {
    margin-right: auto;
    color: #3490dc;
}
.foot-icon {
    width: 7px;
    height: 7px;
    margin-right: 2px;
    vertical-align: -0.500px;
    fill: currentColor;
}
.foot-btn {
    height: 19px;
    margin-left: 1px;
    padding: 0;
    border: 0;
    border-radius: 2px;
    color: #f2f2f2;
    font: 7.500px Roboto, sans-serif;
    white-space: nowrap;
}
.green {
    width: 63px;
    background: #38c172;
}
.crimson {
    width: 67px;
    background: #e0175f;
}
.slate {
    width: 64px;
    margin-left: 2px;
    background: #6c757d;
}

.arrows {
    position: absolute;
    left: 0;
    top: 0;
    width: 1597px;
    height: 821px;
    z-index: 4;
    pointer-events: none;
}
```
